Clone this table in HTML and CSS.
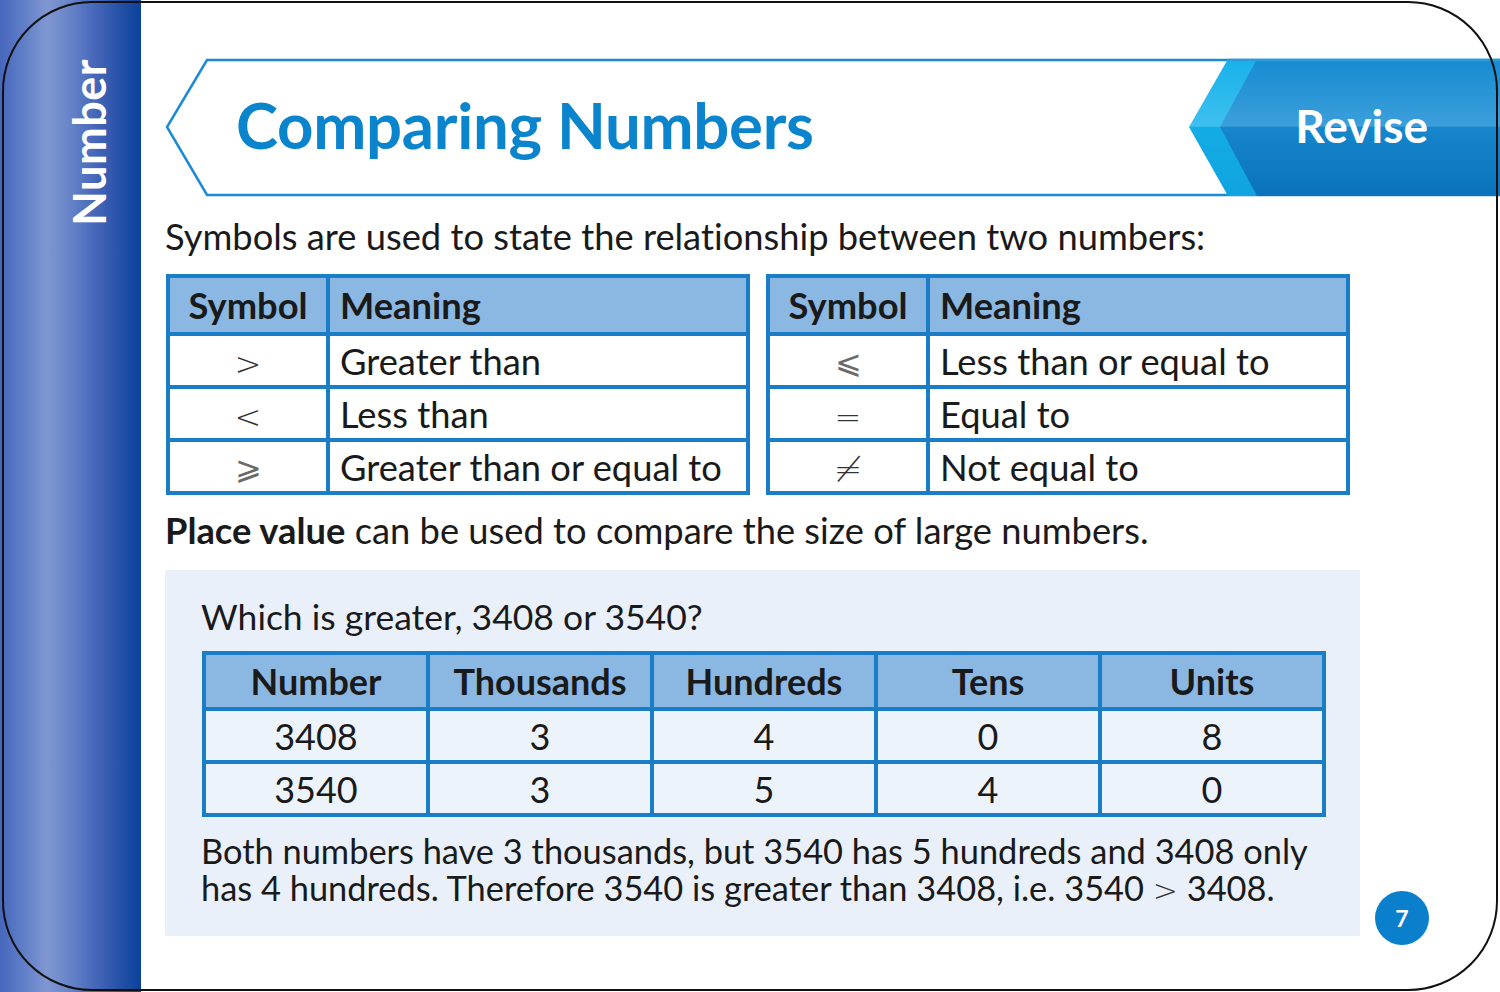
FILE: index.html
```html
<!DOCTYPE html>
<html lang="en">
<head>
<meta charset="utf-8">
<title>Comparing Numbers</title>
<link rel="stylesheet" href="styles.css">
</head>
<body>
<div class="page">
  <aside class="side">
    <span class="side-label">Number</span>
  </aside>
  <main class="content">
    <header class="banner">
      <svg class="banner-shape" viewBox="0 0 1335 139" width="1335" height="139" aria-hidden="true">
        <defs>
          <linearGradient id="gDark" x1="0" y1="0" x2="0" y2="1">
            <stop offset="0" stop-color="#168bd1"/>
            <stop offset="0.49" stop-color="#3c9fdb"/>
            <stop offset="0.5" stop-color="#1686cd"/>
            <stop offset="1" stop-color="#0a72bb"/>
          </linearGradient>
          <linearGradient id="gLight" x1="0" y1="0" x2="0" y2="1">
            <stop offset="0" stop-color="#18b1ea"/>
            <stop offset="0.49" stop-color="#3ec0ef"/>
            <stop offset="0.5" stop-color="#14ace5"/>
            <stop offset="1" stop-color="#0fa4df"/>
          </linearGradient>
        </defs>
        <polyline points="1335,2 42,2 2,69 42,137 1335,137" fill="#ffffff" stroke="#1a8ad4" stroke-width="2.5"/>
        <polygon points="1024,69 1063,1 1335,1 1335,138 1063,138" fill="url(#gLight)"/>
        <polygon points="1055,69 1092,1 1335,1 1335,138 1092,138" fill="url(#gDark)"/>
        <line x1="1063" y1="2" x2="1335" y2="2" stroke="#2a9ad9" stroke-width="2.5"/>
      </svg>
      <div class="banner-text">
        <h1 class="title">Comparing Numbers</h1>
        <span class="revise">Revise</span>
      </div>
    </header>

    <p class="intro">Symbols are used to state the relationship between two numbers:</p>

    <div class="sym-tables">
      <table class="sym">
        <thead>
          <tr><th class="c-sym">Symbol</th><th class="c-mean">Meaning</th></tr>
        </thead>
        <tbody>
          <tr><td class="c-sym"><span class="op">&gt;</span></td><td class="c-mean">Greater than</td></tr>
          <tr><td class="c-sym"><span class="op">&lt;</span></td><td class="c-mean">Less than</td></tr>
          <tr><td class="c-sym"><span class="op op-math">&#x2A7E;</span></td><td class="c-mean">Greater than or equal to</td></tr>
        </tbody>
      </table>
      <table class="sym">
        <thead>
          <tr><th class="c-sym">Symbol</th><th class="c-mean">Meaning</th></tr>
        </thead>
        <tbody>
          <tr><td class="c-sym"><span class="op op-math">&#x2A7D;</span></td><td class="c-mean">Less than or equal to</td></tr>
          <tr><td class="c-sym"><span class="op">=</span></td><td class="c-mean">Equal to</td></tr>
          <tr><td class="c-sym"><span class="op op-ne">&#x2260;</span></td><td class="c-mean">Not equal to</td></tr>
        </tbody>
      </table>
    </div>

    <p class="pv"><b>Place value</b> can be used to compare the size of large numbers.</p>

    <div class="bottom">
      <section class="example">
        <p class="question">Which is greater, 3408 or 3540?</p>
        <table class="pvt">
          <thead>
            <tr><th>Number</th><th>Thousands</th><th>Hundreds</th><th>Tens</th><th>Units</th></tr>
          </thead>
          <tbody>
            <tr><td>3408</td><td>3</td><td>4</td><td>0</td><td>8</td></tr>
            <tr><td>3540</td><td>3</td><td>5</td><td>4</td><td>0</td></tr>
          </tbody>
        </table>
        <p class="explain">Both numbers have 3 thousands, but 3540 has 5 hundreds and 3408 only has 4 hundreds. Therefore 3540 is greater than 3408, i.e. 3540 <span class="op-inline">&gt;</span> 3408.</p>
      </section>
      <div class="page-num">7</div>
    </div>
  </main>
  <div class="frame" aria-hidden="true"></div>
</div>
</body>
</html>
```

FILE: styles.css
```css
* { box-sizing: border-box; }

html, body {
  margin: 0;
  padding: 0;
  background: #ffffff;
}

body {
  font-family: Lato, "Open Sans", "Liberation Sans", sans-serif;
  font-variant-ligatures: no-common-ligatures;
  color: #1a1a1a;
}

.page {
  position: relative;
  width: 1500px;
  height: 992px;
  display: flex;
  overflow: hidden;
  background: #ffffff;
}

/* ---------- left sidebar ---------- */
.side {
  flex: 0 0 141px;
  height: 100%;
  background: linear-gradient(90deg, #4767bd 0%, #5f7dc7 16%, #7f97d1 33%, #6a86ca 48%, #4566b9 68%, #2552a8 85%, #0b429b 100%);
  display: flex;
  flex-direction: column;
  align-items: flex-start;
  padding-top: 59px;
  padding-left: 66px;
}

.side-label {
  writing-mode: vertical-rl;
  transform: rotate(180deg);
  color: #ffffff;
  font-weight: 700;
  font-size: 45px;
  line-height: 46px;
  letter-spacing: 0.5px;
}

/* ---------- main content ---------- */
.content {
  flex: 1 1 auto;
  padding-left: 24px;
  display: flex;
  flex-direction: column;
}

.banner {
  margin-top: 58px;
  display: grid;
  width: 1335px;
  height: 139px;
}

.banner-shape,
.banner-text {
  grid-area: 1 / 1;
}

.banner-shape {
  display: block;
}

.banner-text {
  display: flex;
  align-items: center;
  padding-left: 71px;
  padding-right: 72px;
}

.title {
  margin: 0;
  color: #0a84cc;
  font-weight: 700;
  font-size: 63.5px;
  letter-spacing: -0.3px;
  line-height: 1;
  padding-bottom: 5px;
}

.revise {
  margin-left: auto;
  color: #ffffff;
  font-weight: 700;
  font-size: 46px;
  line-height: 1;
  padding-bottom: 4px;
}

.intro {
  margin: 19px 0 0 0;
  font-size: 36.3px;
  line-height: 40px;
}

/* ---------- symbol tables ---------- */
.sym-tables {
  margin-top: 18px;
  margin-left: 1px;
  display: flex;
  gap: 16px;
}

table {
  border-collapse: collapse;
}

.sym {
  width: 584px;
  border: 4px solid #1a7dc8;
}

.sym th,
.sym td {
  border: 4px solid #1a7dc8;
  font-size: 36.3px;
  padding: 0 10px;
  text-align: left;
}

.sym th {
  background: #8bb8e3;
  font-weight: 700;
  height: 58px;
}

.sym td {
  background: #ffffff;
  height: 53px;
}

.sym .c-sym {
  width: 160px;
  text-align: center;
  padding: 0;
}

.op {
  font-family: "DejaVu Sans", "Liberation Serif", serif;
  font-weight: 200;
  font-size: 32px;
  color: #333333;
  line-height: 1;
}

.op-math {
  font-size: 32px;
  color: #6a6a6a;
  position: relative;
  top: -2px;
}

.op-ne {
  font-size: 34px;
}

/* ---------- place value ---------- */
.pv {
  margin: 15px 0 0 0;
  font-size: 36.3px;
  line-height: 40px;
}

.pv b {
  font-weight: 700;
}

.bottom {
  margin-top: 20px;
  display: flex;
  align-items: flex-end;
  gap: 15px;
}

.example {
  width: 1195px;
  height: 366px;
  background: #e9f0fa;
  padding: 27px 0 0 36px;
}

.question {
  margin: 0;
  font-size: 35.5px;
  line-height: 40px;
}

.pvt {
  margin-top: 14px;
  margin-left: 1px;
  width: 1124px;
  table-layout: fixed;
  border: 4px solid #1a7dc8;
}

.pvt th,
.pvt td {
  border: 4px solid #1a7dc8;
  text-align: center;
  font-size: 36px;
  padding: 0;
}

.pvt th {
  background: #8bb8e3;
  font-weight: 700;
  height: 56px;
}

.pvt td {
  background: #edf3fb;
  height: 53px;
}

.explain {
  margin: 15px 0 0 0;
  font-size: 34.4px;
  line-height: 37px;
  width: 1130px;
}

.op-inline {
  font-family: "DejaVu Sans", "Liberation Serif", serif;
  font-weight: 200;
  font-size: 30px;
  line-height: 1;
  color: #333333;
}

.page-num {
  flex: 0 0 54px;
  width: 54px;
  height: 54px;
  margin-bottom: -9px;
  border-radius: 50%;
  background: #0a7fcb;
  color: #ffffff;
  font-weight: 700;
  font-size: 23px;
  display: flex;
  align-items: center;
  justify-content: center;
}

/* ---------- page outline ---------- */
.frame {
  position: absolute;
  top: 1px;
  left: 2px;
  right: 2px;
  bottom: 1px;
  border: 2.5px solid #111111;
  border-radius: 90px;
  pointer-events: none;
}
```
